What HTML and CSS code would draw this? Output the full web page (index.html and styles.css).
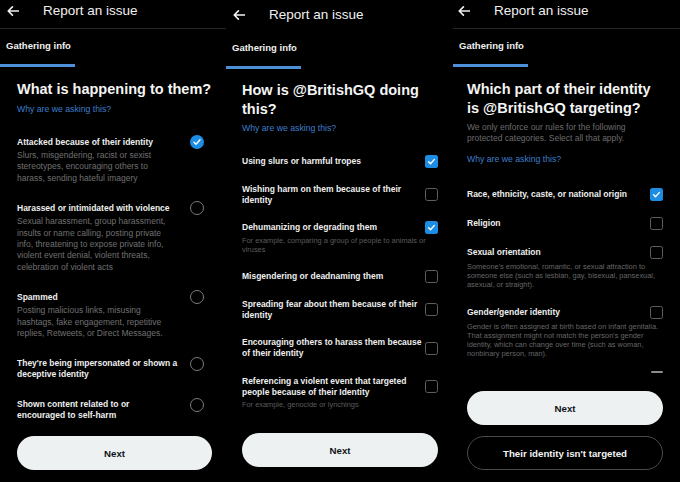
FILE: index.html
```html
<!DOCTYPE html>
<html lang="en">
<head>
    <meta charset="UTF-8">
    <meta name="viewport" content="width=device-width, initial-scale=1.0">
    <title>Report an issue</title>
    <link rel="stylesheet" href="styles.css">
</head>
<body>
    <!-- Step 1: what is happening -->
    <section class="panel panel-first">
        <header class="topbar">
            <svg class="back" viewBox="0 0 12 10" width="12" height="10"><path d="M11.5 5H1.2M5.4 0.9L1.2 5l4.2 4.1"/></svg>
            <h1>Report an issue</h1>
        </header>
        <nav class="tabs"><span class="tab">Gathering info</span></nav>
        <div class="content">
            <h2 class="question">What is happening to them?</h2>
            <a class="why">Why are we asking this?</a>
            <ul class="options options-radio">
                <li class="option">
                    <div class="option-head">
                        <span class="option-title">Attacked because of their identity</span>
                        <span class="radio checked"><svg viewBox="0 0 14 14"><path d="M4 7.2l2 2 4-4.4"/></svg></span>
                    </div>
                    <p class="option-desc">Slurs, misgendering, racist or sexist<br>stereotypes, encouraging others to<br>harass, sending hateful imagery</p>
                </li>
                <li class="option">
                    <div class="option-head">
                        <span class="option-title">Harassed or intimidated with violence</span>
                        <span class="radio"></span>
                    </div>
                    <p class="option-desc">Sexual harassment, group harassment,<br>insults or name calling, posting private<br>info, threatening to expose private info,<br>violent event denial, violent threats,<br>celebration of violent acts</p>
                </li>
                <li class="option">
                    <div class="option-head">
                        <span class="option-title">Spammed</span>
                        <span class="radio"></span>
                    </div>
                    <p class="option-desc">Posting malicious links, misusing<br>hashtags, fake engagement, repetitive<br>replies, Retweets, or Direct Messages.</p>
                </li>
                <li class="option">
                    <div class="option-head">
                        <span class="option-title">They're being impersonated or shown a<br>deceptive identity</span>
                        <span class="radio"></span>
                    </div>
                </li>
                <li class="option">
                    <div class="option-head">
                        <span class="option-title">Shown content related to or<br>encouraged to self-harm</span>
                        <span class="radio"></span>
                    </div>
                </li>
            </ul>
        </div>
        <div class="actions">
            <button class="btn btn-primary">Next</button>
        </div>
    </section>

    <!-- Step 2: how is it happening -->
    <section class="panel panel-middle">
        <header class="topbar">
            <svg class="back" viewBox="0 0 12 10" width="12" height="10"><path d="M11.5 5H1.2M5.4 0.9L1.2 5l4.2 4.1"/></svg>
            <h1>Report an issue</h1>
        </header>
        <nav class="tabs"><span class="tab">Gathering info</span></nav>
        <div class="content">
            <h2 class="question">How is @BritishGQ doing<br>this?</h2>
            <a class="why">Why are we asking this?</a>
            <ul class="options options-check">
                <li class="option">
                    <div class="option-head">
                        <span class="option-title">Using slurs or harmful tropes</span>
                        <span class="box checked"><svg viewBox="0 0 13 13"><path d="M3.6 6.8l1.9 1.9 3.9-4.3"/></svg></span>
                    </div>
                </li>
                <li class="option">
                    <div class="option-head">
                        <span class="option-title">Wishing harm on them because of their<br>identity</span>
                        <span class="box"></span>
                    </div>
                </li>
                <li class="option">
                    <div class="option-head">
                        <span class="option-title">Dehumanizing or degrading them</span>
                        <span class="box checked"><svg viewBox="0 0 13 13"><path d="M3.6 6.8l1.9 1.9 3.9-4.3"/></svg></span>
                    </div>
                    <p class="option-note">For example, comparing a group of people to animals or<br>viruses</p>
                </li>
                <li class="option">
                    <div class="option-head">
                        <span class="option-title">Misgendering or deadnaming them</span>
                        <span class="box"></span>
                    </div>
                </li>
                <li class="option">
                    <div class="option-head">
                        <span class="option-title">Spreading fear about them because of their<br>identity</span>
                        <span class="box"></span>
                    </div>
                </li>
                <li class="option">
                    <div class="option-head">
                        <span class="option-title">Encouraging others to harass them because<br>of their identity</span>
                        <span class="box"></span>
                    </div>
                </li>
                <li class="option">
                    <div class="option-head">
                        <span class="option-title">Referencing a violent event that targeted<br>people because of their Identity</span>
                        <span class="box"></span>
                    </div>
                    <p class="option-note">For example, genocide or lynchings</p>
                </li>
            </ul>
        </div>
        <div class="actions">
            <button class="btn btn-primary">Next</button>
        </div>
    </section>

    <!-- Step 3: which identity -->
    <section class="panel panel-last">
        <header class="topbar">
            <svg class="back" viewBox="0 0 12 10" width="12" height="10"><path d="M11.5 5H1.2M5.4 0.9L1.2 5l4.2 4.1"/></svg>
            <h1>Report an issue</h1>
        </header>
        <nav class="tabs"><span class="tab">Gathering info</span></nav>
        <div class="content">
            <h2 class="question">Which part of their identity<br>is @BritishGQ targeting?</h2>
            <p class="intro">We only enforce our rules for the following<br>protected categories. Select all that apply.</p>
            <a class="why">Why are we asking this?</a>
            <ul class="options options-check">
                <li class="option">
                    <div class="option-head">
                        <span class="option-title">Race, ethnicity, caste, or national origin</span>
                        <span class="box checked"><svg viewBox="0 0 13 13"><path d="M3.6 6.8l1.9 1.9 3.9-4.3"/></svg></span>
                    </div>
                </li>
                <li class="option">
                    <div class="option-head">
                        <span class="option-title">Religion</span>
                        <span class="box"></span>
                    </div>
                </li>
                <li class="option">
                    <div class="option-head">
                        <span class="option-title">Sexual orientation</span>
                        <span class="box"></span>
                    </div>
                    <p class="option-note">Someone's emotional, romantic, or sexual attraction to<br>someone else (such as lesbian, gay, bisexual, pansexual,<br>asexual, or straight).</p>
                </li>
                <li class="option">
                    <div class="option-head">
                        <span class="option-title">Gender/gender identity</span>
                        <span class="box"></span>
                    </div>
                    <p class="option-note">Gender is often assigned at birth based on infant genitalia.<br>That assignment might not match the person's gender<br>identity, which can change over time (such as woman,<br>nonbinary person, man).</p>
                </li>
            </ul>
            <div class="peek"></div>
        </div>
        <div class="actions">
            <button class="btn btn-primary">Next</button>
            <button class="btn btn-outline">Their identity isn't targeted</button>
        </div>
    </section>
</body>
</html>
```

FILE: styles.css
```css
* {
    margin: 0;
    padding: 0;
    box-sizing: border-box;
}

body {
    background: #000;
    color: #eeeeee;
    font-family: 'Liberation Sans', Arial, sans-serif;
    width: 680px;
    height: 482px;
    overflow: hidden;
    display: grid;
    grid-template-columns: 226px 227px 227px;
}

.panel {
    display: flex;
    flex-direction: column;
    height: 482px;
    padding-bottom: 12px;
}

/* header */
.topbar {
    height: 29px;
    display: flex;
    align-items: center;
    gap: 24px;
    padding: 1px 0 8px 7px;
    border-bottom: 1px solid #242424;
}

.back {
    flex: none;
    fill: none;
    stroke: #f2f2f2;
    stroke-width: 1.6;
    stroke-linecap: round;
    stroke-linejoin: round;
}

.topbar h1 {
    font-size: 13.5px;
    font-weight: 400;
    color: #f0f0f0;
}

.tabs {
    height: 38px;
}

.tab {
    display: inline-block;
    height: 100%;
    padding: 11px 4px 0 6px;
    font-size: 9.5px;
    line-height: 12px;
    font-weight: 700;
    color: #f0f0f0;
    border-bottom: 3px solid #4d90d8;
}

/* body */
.content {
    padding: 0 15px 0 16px;
}

.question {
    margin-top: 13px;
    font-size: 14.5px;
    line-height: 18.5px;
    font-weight: 700;
    color: #f4f4f4;
}

.intro {
    margin-top: 5px;
    font-size: 8.5px;
    line-height: 10.7px;
    color: #6c6c6c;
}

.why {
    display: block;
    margin-top: 4px;
    font-size: 8.7px;
    line-height: 12px;
    color: #3f7ecb;
}

.intro + .why {
    margin-top: 10px;
}

.options {
    list-style: none;
    display: flex;
    flex-direction: column;
    gap: 19px;
    margin-top: 22px;
}

.options-check {
    gap: 16.5px;
}

.option-head {
    display: flex;
    align-items: center;
    gap: 4px;
}

.options-radio .option-head {
    align-items: flex-start;
}

.option-title {
    flex: 1;
    min-width: 0;
    white-space: nowrap;
    font-size: 8.5px;
    line-height: 11px;
    font-weight: 700;
    color: #efefef;
}

.option-desc {
    margin-top: 2.5px;
    font-size: 8.5px;
    line-height: 11.3px;
    color: #707070;
}

.option-note {
    margin-top: 2.5px;
    white-space: nowrap;
    font-size: 7.4px;
    line-height: 9.5px;
    color: #5c5c5c;
}

/* controls */
.radio {
    flex: none;
    width: 14px;
    height: 14px;
    margin: -1.5px 8px -1.5px 0;
    border: 1.5px solid #7c7c7c;
    border-radius: 50%;
}

.radio.checked {
    border: none;
    background: #1d8de4;
}

.box {
    flex: none;
    width: 13px;
    height: 13px;
    margin: -1px 0;
    border: 1.5px solid #5e5e5e;
    border-radius: 2.5px;
}

.box.checked {
    border: none;
    background: #1d8de4;
}

.radio svg,
.box svg {
    display: block;
    width: 100%;
    height: 100%;
    fill: none;
    stroke: #fff;
    stroke-width: 1.4;
    stroke-linecap: round;
    stroke-linejoin: round;
}

.peek {
    width: 12px;
    height: 2px;
    margin: 13px 0 0 auto;
    background: #8c8c8c;
    border-radius: 1px;
}

/* buttons */
.actions {
    margin-top: auto;
    padding: 0 15px 0 16px;
    display: flex;
    flex-direction: column;
    gap: 11px;
}

.btn {
    height: 34px;
    width: 100%;
    border-radius: 17px;
    font-family: inherit;
    font-size: 9.7px;
    font-weight: 700;
    cursor: pointer;
}

.btn-primary {
    background: #eef1f2;
    color: #0f1419;
    border: none;
}

.btn-outline {
    background: transparent;
    color: #f4f4f4;
    border: 1px solid #4a4a4a;
}

/* per-screen offsets */
.panel-first .content,
.panel-first .actions {
    padding-left: 17px;
    padding-right: 14px;
}

.panel-middle {
    padding-top: 2px;
    padding-bottom: 15px;
}

.panel-middle .topbar {
    padding-top: 4px;
    padding-bottom: 7px;
    border-bottom-color: transparent;
}

.panel-middle .question {
    margin-top: 12px;
}

.panel-last .topbar {
    padding-left: 5px;
}

.panel-last .content,
.panel-last .actions {
    padding-left: 14px;
    padding-right: 17px;
}

.panel-last .options {
    margin-top: 23.5px;
    gap: 18px;
}

.panel-last .option-note {
    margin-top: 4px;
    line-height: 9px;
    color: #666;
}
```
